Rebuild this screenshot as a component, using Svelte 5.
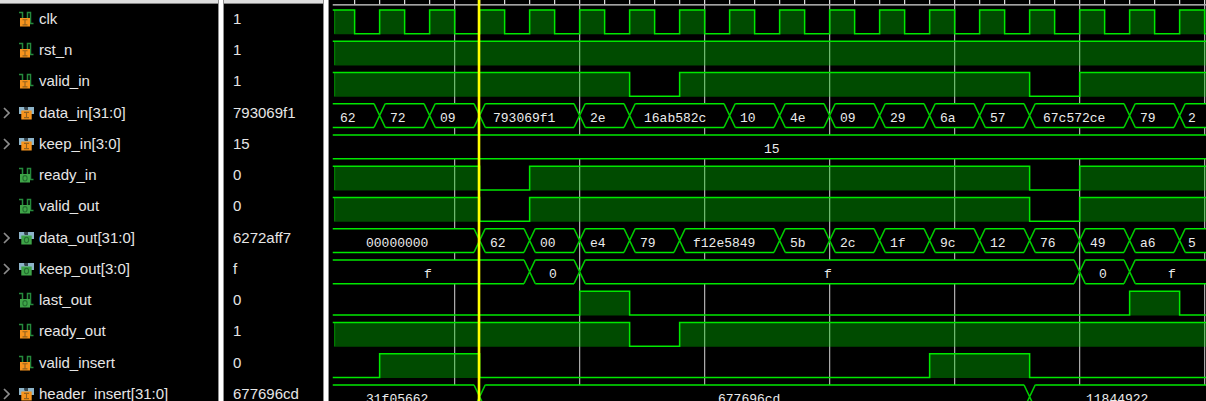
<script>
  const high = (...toggles) => ({ level: 1, toggles });
  const low = (...toggles) => ({ level: 0, toggles });
  const bus = (edges, labels) => ({ edges, labels });

  const signals = [
    { name: 'clk', value: '1', dir: 'in', wave: high(...Array.from({ length: 120 }, (_, k) => k)) },
    { name: 'rst_n', value: '1', dir: 'in', wave: high() },
    { name: 'valid_in', value: '1', dir: 'in', wave: high(11, 13, 27, 29) },
    {
      name: 'data_in[31:0]', value: '793069f1', dir: 'in',
      wave: bus([1, 3, 5, 9, 11, 15, 17, 19, 21, 23, 25, 27, 31, 33], [
        ['62', 11], ['72', 61], ['09', 111], ['793069f1', 164], ['2e', 261], ['16ab582c', 315],
        ['10', 411], ['4e', 461], ['09', 511], ['29', 561], ['6a', 611], ['57', 661],
        ['67c572ce', 714], ['79', 811], ['2', 859]
      ])
    },
    { name: 'keep_in[3:0]', value: '15', dir: 'in', wave: bus([], [['15', 435]]) },
    { name: 'ready_in', value: '0', dir: 'out', wave: high(5, 7, 27, 29) },
    { name: 'valid_out', value: '0', dir: 'out', wave: high(5, 7, 27, 29) },
    {
      name: 'data_out[31:0]', value: '6272aff7', dir: 'out',
      wave: bus([5, 7, 9, 11, 13, 17, 19, 21, 23, 25, 27, 29, 31, 33], [
        ['00000000', 37], ['62', 161], ['00', 211], ['e4', 261], ['79', 311], ['f12e5849', 364],
        ['5b', 461], ['2c', 511], ['1f', 561], ['9c', 611], ['12', 661], ['76', 711],
        ['49', 761], ['a6', 811], ['5', 859]
      ])
    },
    {
      name: 'keep_out[3:0]', value: 'f', dir: 'out',
      wave: bus([7, 9, 29, 31], [['f', 95], ['0', 220], ['f', 495], ['0', 770], ['f', 839]])
    },
    { name: 'last_out', value: '0', dir: 'out', wave: low(9, 11, 31, 33) },
    { name: 'ready_out', value: '1', dir: 'in', wave: high(11, 13) },
    { name: 'valid_insert', value: '0', dir: 'in', wave: low(1, 5, 23, 27) },
    {
      name: 'header_insert[31:0]', value: '677696cd', dir: 'in',
      wave: bus([5, 27], [['31f05662', 37], ['677696cd', 389], ['11844922', 757]])
    }
  ];

  // Waveform units: 20 per half clock period, 25 per signal row.
  const SCALE = 1.25;
  const START = 3;
  const END = 2420;
  const ROW = 25;
  const HEIGHT = 19;
  const edgeX = (k) => 20.5 + 20 * k;
  const topY = (i) => 7.5 + ROW * i;
  const textY = (i) => Math.round(topY(i) * SCALE + 18.5);

  function spans(edges) {
    const xs = [START, ...edges.map(edgeX), END];
    return xs.slice(0, -1).map((x, n) => [x, xs[n + 1]]);
  }

  function linePath(wave, top) {
    const y = (level) => (level ? top : top + HEIGHT);
    let level = wave.level;
    let d = `M${START} ${y(level)}`;
    for (const k of wave.toggles) {
      level = 1 - level;
      d += `H${edgeX(k)}V${y(level)}`;
    }
    return d + `H${END}`;
  }

  function fills(wave) {
    return spans(wave.toggles).filter((_, n) => (n % 2 === 0) === (wave.level === 1));
  }

  function cellPath([x1, x2], top) {
    const bottom = top + HEIGHT;
    const mid = top + HEIGHT / 2;
    const left = x1 === START
      ? `M${x1} ${top}`
      : `M${x1} ${mid}L${x1 + 4} ${top}`;
    const right = x2 === END
      ? `H${x2}V${bottom}`
      : `H${x2 - 4}L${x2} ${mid}L${x2 - 4} ${bottom}`;
    return left + right + `H${x1 === START ? x1 : x1 + 4}` + (x1 === START ? '' : `L${x1} ${mid}`);
  }

  const ticks = Array.from({ length: 120 }, (_, k) => edgeX(k));
  const gridLines = Array.from({ length: 24 }, (_, n) => edgeX(4 + 5 * n));
</script>

<main class="viewer">
  <section class="panel names" aria-label="Signal names">
    <div class="strip"></div>
    <ul>
      {#each signals as s}
        <li>
          <span class="toggle">
            {#if s.wave.edges}
              <button type="button" aria-label="Expand {s.name}">
                <svg width="7" height="12" viewBox="0 0 7 12" aria-hidden="true">
                  <path d="M1 1L6 6L1 11" fill="none" stroke="#8c8c8c" stroke-width="1.7" />
                </svg>
              </button>
            {/if}
          </span>
          <svg class="icon" width="16" height="16" viewBox="0 0 16 16" aria-hidden="true">
            {#if s.wave.edges}
              <path d="M0 2H5.5V4H9V2H15V9H12V11H3V9H0Z" fill="#8db4c9" />
              <path d="M5.5 2H9V5H5.5Z" fill="#34424a" />
              <rect x="2.3" y="5.5" width="10.4" height="9" fill={s.dir === 'in' ? '#f7941d' : '#3fa548'} />
            {:else}
              <path d="M0 1.5H3.5V11M8.5 11V1.5H11.5V12.5H14.5" fill="none" stroke="#258a3c" stroke-width="1.5" />
              <rect x="1" y="7" width="10" height="8.5" fill={s.dir === 'in' ? '#f7941d' : '#3fa548'} />
            {/if}
            <g transform={s.wave.edges ? 'translate(7.5 10)' : 'translate(6 11.3)'} fill="none" stroke={s.dir === 'in' ? '#94631f' : '#246f30'} stroke-width="1.1">
              {#if s.dir === 'in'}
                <path d="M-2.5 -2.6H2.5M0 -2.6V2.6M-2.5 2.6H2.5" />
              {:else}
                <ellipse rx="2.1" ry="2.7" />
              {/if}
            </g>
          </svg>
          <span class="text">{s.name}</span>
        </li>
      {/each}
    </ul>
  </section>

  <div class="splitter"></div>

  <section class="panel values" aria-label="Signal values">
    <div class="strip"></div>
    <ul>
      {#each signals as s}
        <li><span class="text">{s.value}</span></li>
      {/each}
    </ul>
  </section>

  <div class="splitter"></div>

  <section class="waves" aria-label="Waveforms">
    <svg width="100%" height="100%">
      <g transform="translate(0 0.5) scale({SCALE})">
        <g fill="none" stroke="#d8d8d8">
          {#each ticks as x}<path d="M{x} -1V3" />{/each}
          <path d="M{START} 3.4H{END}" />
        </g>
        <g fill="none" stroke="#aaaaaa">
          {#each gridLines as x}<path d="M{x} 3V{topY(12)}" />{/each}
        </g>
        {#each signals as s, i}
          {#if s.wave.edges}
            {#each spans(s.wave.edges) as cell}
              <path d={cellPath(cell, topY(i))} fill="#000" />
            {/each}
            <g fill="none" stroke="#00e800" stroke-width="1.2">
              {#each spans(s.wave.edges) as [x1, x2]}
                <path d="M{x1 === START ? x1 : x1 + 4.5} {topY(i)}H{x2 - 4.5}M{x1 === START ? x1 : x1 + 4.5} {topY(i) + HEIGHT}H{x2 - 4.5}" />
              {/each}
              {#each s.wave.edges as k}
                <path stroke="#00cc00" d="M{edgeX(k) - 4.5} {topY(i)}L{edgeX(k) + 4.5} {topY(i) + HEIGHT}M{edgeX(k) - 4.5} {topY(i) + HEIGHT}L{edgeX(k) + 4.5} {topY(i)}" />
              {/each}
            </g>
          {:else}
            {#each fills(s.wave) as [x1, x2]}
              <rect x={x1 === START ? 4 : x1} y={topY(i)} width={x2 - (x1 === START ? 4 : x1)} height={HEIGHT + 0.5} fill="rgba(0,214,0,0.35)" />
            {/each}
            {#if s.wave.level}
              <path d="M4.5 {topY(i)}V{topY(i) + HEIGHT}" stroke="#007a00" fill="none" />
            {/if}
            <path d={linePath(s.wave, topY(i))} fill="none" stroke="#00e800" stroke-width="1.2" />
          {/if}
        {/each}
      </g>
      {#each signals as s, i}
        {#if s.wave.edges}
          {#each s.wave.labels as [label, x]}
            <text {x} y={textY(i)}>{label}</text>
          {/each}
        {/if}
      {/each}
      <rect x="148" y="0" width="4" height="100%" fill="#ffff00" opacity="0.3" />
      <rect x="149" y="0" width="2" height="100%" fill="#ffff00" />
    </svg>
  </section>
</main>

<style>
  :global(body) {
    background: #000;
  }

  .viewer {
    display: flex;
    height: 100vh;
    overflow: hidden;
    background: #000;
    color: #e6e6e6;
    font: 15px/20px "Liberation Sans", Arial, sans-serif;
  }

  .panel {
    flex: none;
    overflow: hidden;
  }

  .names {
    width: 218px;
  }

  .values {
    width: 99px;
  }

  .strip {
    box-sizing: border-box;
    height: 4px;
    background: #dedede;
    border-bottom: 1px solid #858585;
  }

  .splitter {
    box-sizing: border-box;
    flex: none;
    width: 6px;
    background: #fff;
    border: solid #8f8f8f;
    border-width: 0 1px;
  }

  ul {
    margin: -1px 0 0;
    padding: 0;
    list-style: none;
  }

  li {
    display: flex;
    align-items: center;
    height: 31px;
    white-space: nowrap;
  }

  li:nth-child(4n + 3) {
    height: 32px;
  }

  .toggle {
    display: flex;
    width: 19px;
  }

  button {
    display: flex;
    padding: 0 3px;
    border: 0;
    background: none;
    cursor: pointer;
  }

  .icon {
    margin-right: 4px;
  }

  .values li {
    padding-left: 9px;
  }

  .waves {
    flex: 1;
    min-width: 0;
  }

  .waves svg {
    display: block;
  }

  text {
    fill: #ececec;
    font: 13px "Liberation Mono", "Courier New", monospace;
  }
</style>
